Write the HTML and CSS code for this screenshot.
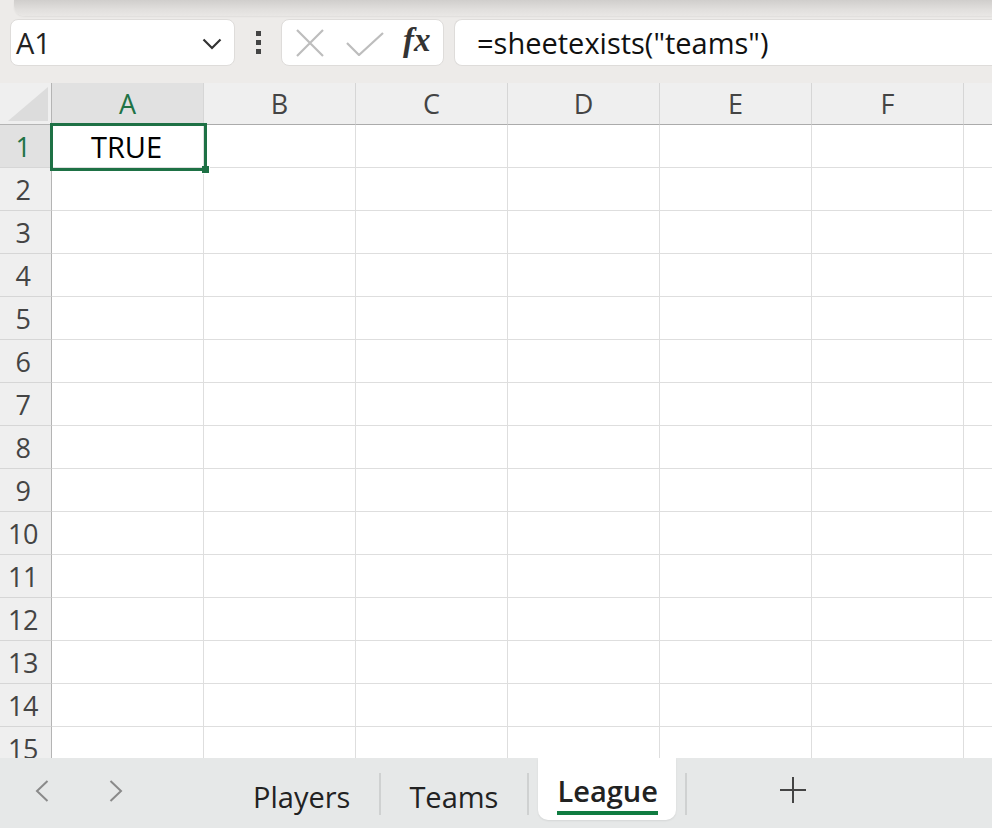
FILE: index.html
```html
<!DOCTYPE html>
<html>
<head>
<meta charset="utf-8">
<link rel="stylesheet" href="styles.css">
</head>
<body>
<div class="app">
  <div class="toolbar">
    <div class="topshade"></div>
    <div class="fbar">
      <div class="namebox">
        <span class="nb-text">A1</span>
        <svg class="chev" width="20" height="12" viewBox="0 0 20 12"><path d="M1.5 1.5 L10 10 L18.5 1.5" fill="none" stroke="#333" stroke-width="2.2"/></svg>
      </div>
      <div class="dots"><i></i><i></i><i></i></div>
      <div class="fxbox">
        <svg class="ic" width="28" height="28" viewBox="0 0 28 28"><path d="M1 1 L27 27 M27 1 L1 27" stroke="#bdbdbd" stroke-width="2.2" fill="none"/></svg>
        <svg class="ic" width="38" height="24" viewBox="0 0 38 24"><path d="M1 11 L13 23 L37 1" stroke="#bdbdbd" stroke-width="2.2" fill="none"/></svg>
        <span class="fx">fx</span>
      </div>
      <div class="formula">=sheetexists("teams")</div>
    </div>
  </div>
  <div class="sheet">
    <div class="grid">
      <div class="corner"><svg width="40" height="34" viewBox="0 0 40 34"><path d="M40 0 L40 34 L0 34 Z" fill="#dcdcdc"/></svg></div>
      <div class="ch sel">A</div><div class="ch">B</div><div class="ch">C</div><div class="ch">D</div><div class="ch">E</div><div class="ch">F</div><div class="ch last"></div>

      <div class="rh sel">1</div><div class="c val">TRUE</div><div class="c"></div><div class="c"></div><div class="c"></div><div class="c"></div><div class="c"></div><div class="c"></div>
      <div class="rh">2</div><div class="c"></div><div class="c"></div><div class="c"></div><div class="c"></div><div class="c"></div><div class="c"></div><div class="c"></div>
      <div class="rh">3</div><div class="c"></div><div class="c"></div><div class="c"></div><div class="c"></div><div class="c"></div><div class="c"></div><div class="c"></div>
      <div class="rh">4</div><div class="c"></div><div class="c"></div><div class="c"></div><div class="c"></div><div class="c"></div><div class="c"></div><div class="c"></div>
      <div class="rh">5</div><div class="c"></div><div class="c"></div><div class="c"></div><div class="c"></div><div class="c"></div><div class="c"></div><div class="c"></div>
      <div class="rh">6</div><div class="c"></div><div class="c"></div><div class="c"></div><div class="c"></div><div class="c"></div><div class="c"></div><div class="c"></div>
      <div class="rh">7</div><div class="c"></div><div class="c"></div><div class="c"></div><div class="c"></div><div class="c"></div><div class="c"></div><div class="c"></div>
      <div class="rh">8</div><div class="c"></div><div class="c"></div><div class="c"></div><div class="c"></div><div class="c"></div><div class="c"></div><div class="c"></div>
      <div class="rh">9</div><div class="c"></div><div class="c"></div><div class="c"></div><div class="c"></div><div class="c"></div><div class="c"></div><div class="c"></div>
      <div class="rh">10</div><div class="c"></div><div class="c"></div><div class="c"></div><div class="c"></div><div class="c"></div><div class="c"></div><div class="c"></div>
      <div class="rh">11</div><div class="c"></div><div class="c"></div><div class="c"></div><div class="c"></div><div class="c"></div><div class="c"></div><div class="c"></div>
      <div class="rh">12</div><div class="c"></div><div class="c"></div><div class="c"></div><div class="c"></div><div class="c"></div><div class="c"></div><div class="c"></div>
      <div class="rh">13</div><div class="c"></div><div class="c"></div><div class="c"></div><div class="c"></div><div class="c"></div><div class="c"></div><div class="c"></div>
      <div class="rh">14</div><div class="c"></div><div class="c"></div><div class="c"></div><div class="c"></div><div class="c"></div><div class="c"></div><div class="c"></div>
      <div class="rh">15</div><div class="c"></div><div class="c"></div><div class="c"></div><div class="c"></div><div class="c"></div><div class="c"></div><div class="c"></div>
    </div>
    <div class="selbox"><div class="handle"></div></div>
  </div>
  <div class="tabbar">
    <div class="navs">
      <svg width="14" height="22" viewBox="0 0 14 22"><path d="M12.5 1 L2 11 L12.5 21" fill="none" stroke="#8a8a8a" stroke-width="2"/></svg>
      <svg width="14" height="22" viewBox="0 0 14 22"><path d="M1.5 1 L12 11 L1.5 21" fill="none" stroke="#8a8a8a" stroke-width="2"/></svg>
    </div>
    <div class="tabs">
      <div class="tab t1">Players</div>
      <div class="sep"></div>
      <div class="tab t2">Teams</div>
      <div class="sep"></div>
      <div class="tab active"><span>League</span></div>
      <div class="sep"></div>
      <div class="add"><svg width="26" height="26" viewBox="0 0 26 26"><path d="M13 0 V26 M0 13 H26" stroke="#444" stroke-width="2" fill="none"/></svg></div>
    </div>
  </div>
</div>
</body>
</html>
```

FILE: styles.css
```css
* { box-sizing: border-box; }
html, body { margin: 0; padding: 0; }
body {
  width: 992px;
  height: 828px;
  overflow: hidden;
  font-family: "Open Sans", "Noto Sans", sans-serif;
  background: #ffffff;
}
.app { width: 992px; height: 828px; display: flex; flex-direction: column; }

.toolbar {
  height: 83px;
  background: #edebe9;
  position: relative;
}
.topshade {
  position: absolute;
  left: 14px; right: 0; top: 0;
  height: 16px;
  background: linear-gradient(#d0cecc, #e1dfdd 60%, #e9e7e5);
  border-bottom-left-radius: 10px;
  box-shadow: 0 1px 2px rgba(0,0,0,0.06);
}
.fbar {
  position: relative;
  display: flex;
  align-items: center;
  padding: 19px 0 0 10px;
  height: 66px;
}
.namebox {
  width: 225px;
  height: 47px;
  background: #fff;
  border: 1px solid #dedcda;
  border-radius: 8px;
  display: flex;
  align-items: center;
  justify-content: space-between;
  padding: 0 12px 0 5px;
}
.nb-text { font-size: 29px; color: #222; }
.chev { margin-top: 2px; }
.dots {
  width: 46px;
  display: flex;
  flex-direction: column;
  align-items: center;
  gap: 4px;
}
.dots i { display: block; width: 5px; height: 5px; background: #444; }
.fxbox {
  width: 163px;
  height: 47px;
  background: #fff;
  border: 1px solid #dedcda;
  border-radius: 8px;
  display: flex;
  align-items: center;
  padding: 0 0 0 14px;
}
.fxbox .ic:first-child { margin-right: 22px; }
.fxbox .ic:nth-child(2) { margin-right: 19px; margin-top: 2px; }
.fx {
  font-family: "Liberation Serif", "DejaVu Serif", serif;
  font-style: italic;
  font-weight: bold;
  font-size: 33px;
  color: #333;
  line-height: 1;
  margin-top: -4px;
}
.formula {
  margin-left: 10px;
  flex: 1;
  height: 47px;
  background: #fff;
  border: 1px solid #dedcda;
  border-right: none;
  border-radius: 8px 0 0 8px;
  font-size: 29px;
  color: #111;
  display: flex;
  align-items: center;
  padding-left: 22px;
}

.sheet {
  position: relative;
  height: 675px;
  overflow: hidden;
  background: #fff;
}
.grid {
  display: grid;
  grid-template-columns: 52px repeat(6, 152px) 40px;
  grid-template-rows: 42px repeat(15, 43px);
}
.corner {
  background: #efefef;
  border-right: 1px solid #b4b4b4;
  border-bottom: 1px solid #b4b4b4;
  display: flex;
  align-items: flex-end;
  justify-content: flex-end;
  padding: 0 3px 3px 0;
}
.ch {
  background: #efefef;
  border-right: 1px solid #d6d6d6;
  border-bottom: 1px solid #ababab;
  display: flex;
  align-items: center;
  justify-content: center;
  font-size: 27px;
  color: #444;
  padding-bottom: 1px;
}
.ch.sel { background: #e1e1e1; color: #217346; }
.ch.last { border-right: none; }
.rh {
  background: #efefef;
  border-right: 1px solid #b4b4b4;
  border-bottom: 1px solid #d6d6d6;
  display: flex;
  align-items: center;
  justify-content: center;
  font-size: 27px;
  color: #444;
  padding-right: 5px;
  letter-spacing: -0.5px;
}
.rh.sel { background: #e1e1e1; color: #217346; }
.c {
  border-right: 1px solid #dedede;
  border-bottom: 1px solid #dedede;
}
.val {
  display: flex;
  align-items: center;
  justify-content: center;
  font-size: 29px;
  color: #000;
  padding-right: 2px;
}
.selbox {
  position: absolute;
  left: 50px;
  top: 40px;
  width: 157px;
  height: 48px;
  border: 3px solid #1e7145;
}
.handle {
  position: absolute;
  right: -6px;
  bottom: -6px;
  width: 8px;
  height: 8px;
  background: #1e7145;
  border: 1px solid #fff;
  border-top: none;
  border-left: none;
}

.tabbar {
  height: 70px;
  background: #e6e8e8;
  display: flex;
}
.navs {
  width: 218px;
  display: flex;
  align-items: center;
  gap: 60px;
  padding: 0 0 0 35px;
  margin-top: -4px;
}
.tabs { display: flex; align-items: flex-start; }
.tab {
  font-size: 29px;
  color: #222;
  height: 62px;
  display: flex;
  align-items: center;
  padding-top: 14px;
  white-space: nowrap;
}
.t1 { padding-left: 35px; padding-right: 29px; }
.t2 { padding-left: 28px; padding-right: 29px; }
.sep {
  width: 2px;
  height: 42px;
  margin-top: 15px;
  background: #cfd1d1;
}
.tab.active {
  background: #fff;
  border-radius: 0 0 10px 10px;
  padding: 0 18px 0 19px;
  margin: 0 9px;
  height: 62px;
  font-weight: 600;
  box-shadow: 0 1px 2px rgba(0,0,0,0.08);
}
.tab.active span {
  border-bottom: 4px solid #107c41;
  line-height: 40px;
  margin-top: 8px;
}
.add {
  width: 212px;
  display: flex;
  align-items: center;
  justify-content: center;
  height: 70px;
  margin-top: -3px;
}
```
